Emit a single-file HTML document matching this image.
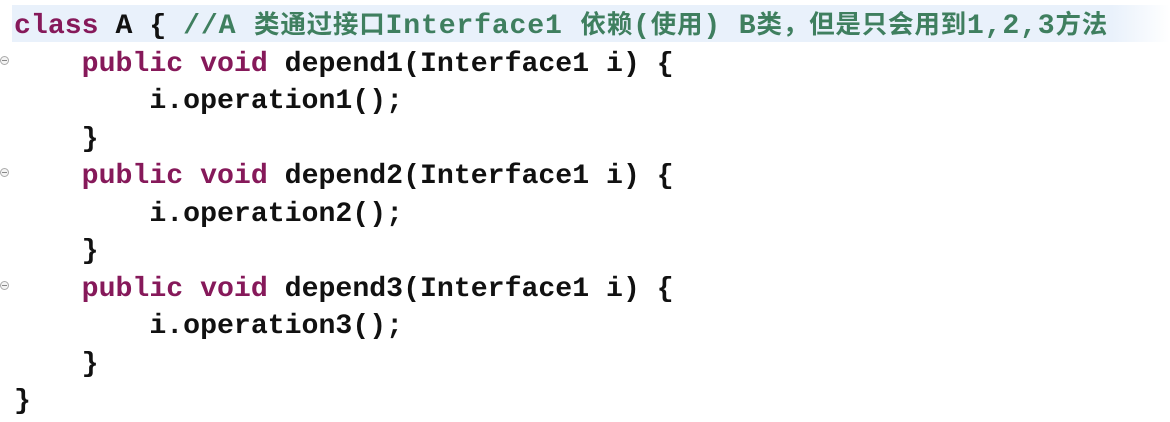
<!DOCTYPE html>
<html><head><meta charset="utf-8"><style>
html,body{margin:0;padding:0;background:#fff;width:1170px;height:422px;overflow:hidden}
.code{position:absolute;left:14px;top:4px;font-family:"Liberation Mono","Noto Sans CJK SC",monospace;font-weight:bold;font-size:28.2px;line-height:37.5px;color:#111;white-space:pre}
.hl{position:absolute;left:12px;top:5px;width:1158px;height:37px;background:linear-gradient(90deg,#e9f1fb 0,#e9f1fb 95%,#fff 100%)}
.k{color:#86195a}
.c{color:#3f7f5f;letter-spacing:0.8px}
.z{font-size:25.5px;font-family:"Noto Sans CJK SC",sans-serif}
.f{position:absolute;left:0;width:7px;height:7px;border:1px solid #aaa;border-radius:50%;background:#f4f4f4}
.f:after{content:"";position:absolute;left:1px;top:3px;width:5px;height:1px;background:#888}
</style></head><body>
<div class="hl"></div>
<div class="f" style="top:56px"></div>
<div class="f" style="top:168px"></div>
<div class="f" style="top:281px"></div>
<div class="code"><span class="k">class</span> A { <span class="c">//A <span class="z">类通过接口</span>Interface1 <span class="z">依赖</span>(<span class="z">使用</span>) B<span class="z">类，但是只会用到</span>1,2,3<span class="z">方法</span></span>
    <span class="k">public void</span> depend1(Interface1 i) {
        i.operation1();
    }
    <span class="k">public void</span> depend2(Interface1 i) {
        i.operation2();
    }
    <span class="k">public void</span> depend3(Interface1 i) {
        i.operation3();
    }
}</div>
</body></html>
